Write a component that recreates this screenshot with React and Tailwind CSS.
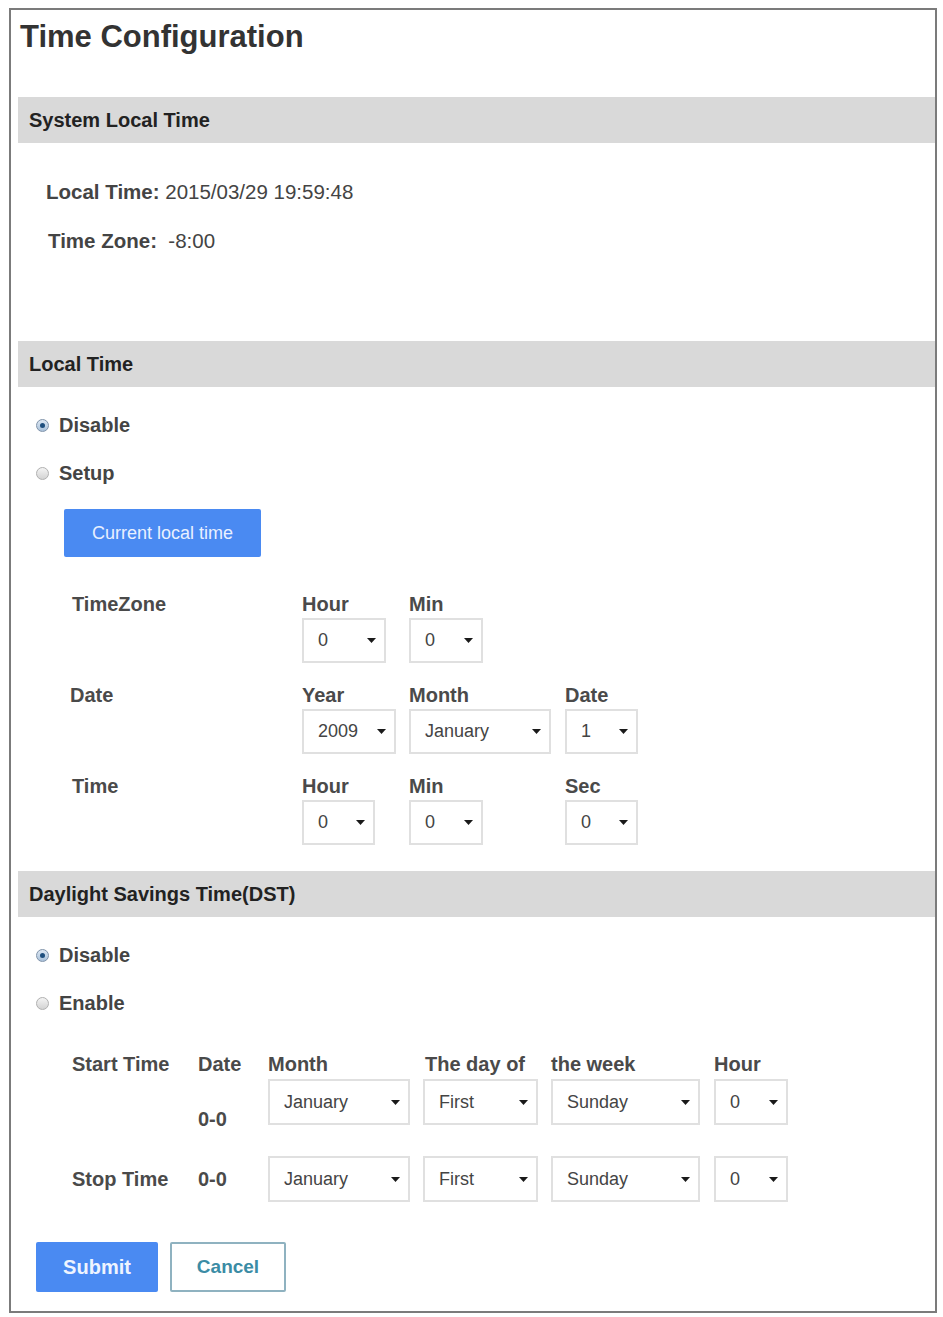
import React from "react";

const Arrow = () => (
  <svg width="9" height="5" viewBox="0 0 9 5" className="shrink-0">
    <path d="M0 0H9L4.5 5Z" fill="#1a1a1a" />
  </svg>
);

function Select({ value, className, tall = false }) {
  return (
    <div
      className={
        (tall ? "h-[46px] " : "h-[45px] ") +
        "flex items-center justify-between border-2 border-[#e0e0e0] bg-white pl-[14px] pr-[8px] text-[18px] text-[#444] " +
        className
      }
    >
      <span>{value}</span>
      <Arrow />
    </div>
  );
}

function Radio({ checked, label }) {
  return (
    <div className="flex h-[28px] items-center pl-[25px]">
      {checked ? (
        <span className="flex h-[13px] w-[13px] items-center justify-center rounded-full border border-[#7f93aa] bg-gradient-to-b from-[#dfe9f4] to-[#a9c1da]">
          <span className="h-[5px] w-[5px] rounded-full bg-[#1f4f7e]" />
        </span>
      ) : (
        <span className="h-[13px] w-[13px] rounded-full border border-[#b0b0b0] bg-gradient-to-b from-[#f4f4f4] to-[#d3d3d3]" />
      )}
      <span className="ml-[10px] text-[20px] font-bold leading-[28px] text-[#444]">{label}</span>
    </div>
  );
}

function Band({ children }) {
  return (
    <div className="ml-[7px] flex h-[46px] items-center bg-[#d9d9d9] pl-[11px] text-[20px] font-bold text-[#222]">
      {children}
    </div>
  );
}

const Label = ({ children, className = "" }) => (
  <div className={"h-[28px] text-[20px] font-bold leading-[28px] text-[#4a4a4a] " + className}>{children}</div>
);

export default function App() {
  return (
    <div className="min-h-[1317px] bg-white pl-[9px] pt-[8px] font-['Liberation_Sans',Arial,sans-serif]">
      <div className="flex h-[1305px] w-[928px] flex-col border-2 border-[#7b7b7b]">
        {/* Title */}
        <div className="h-[87px] pl-[9px] pt-[9px]">
          <h1 className="text-[31px] font-bold leading-[36px] text-[#333]">Time Configuration</h1>
        </div>

        {/* System local time */}
        <Band>System Local Time</Band>
        <div className="h-[198px] pt-[35px] text-[20.5px] leading-[28px] text-[#444]">
          <div className="pl-[35px]">
            <span className="font-bold">Local Time:</span> 2015/03/29 19:59:48
          </div>
          <div className="mt-[21px] pl-[37px]">
            <span className="font-bold">Time Zone:</span>&nbsp; -8:00
          </div>
        </div>

        {/* Local time */}
        <Band>Local Time</Band>
        <div className="pt-[24px]">
          <Radio checked label="Disable" />
          <div className="mt-[20px]">
            <Radio label="Setup" />
          </div>
          <button className="ml-[53px] mt-[22px] h-[48px] w-[197px] rounded-[2px] bg-[#4a8af2] text-[18px] text-[#e8f0ff]">
            Current local time
          </button>

          <div className="ml-[61px] mt-[33px] flex">
            <Label className="w-[230px]">TimeZone</Label>
            <div className="w-[107px]">
              <Label>Hour</Label>
              <Select value="0" className="w-[84px]" />
            </div>
            <div className="w-[156px]">
              <Label>Min</Label>
              <Select value="0" className="w-[74px]" />
            </div>
          </div>

          <div className="ml-[59px] mt-[18px] flex">
            <Label className="w-[232px]">Date</Label>
            <div className="w-[107px]">
              <Label>Year</Label>
              <Select value="2009" className="w-[94px]" />
            </div>
            <div className="w-[156px]">
              <Label>Month</Label>
              <Select value="January" className="w-[142px]" />
            </div>
            <div>
              <Label>Date</Label>
              <Select value="1" className="w-[73px]" />
            </div>
          </div>

          <div className="ml-[61px] mt-[18px] flex">
            <Label className="w-[230px]">Time</Label>
            <div className="w-[107px]">
              <Label>Hour</Label>
              <Select value="0" className="w-[73px]" />
            </div>
            <div className="w-[156px]">
              <Label>Min</Label>
              <Select value="0" className="w-[74px]" />
            </div>
            <div>
              <Label>Sec</Label>
              <Select value="0" className="w-[73px]" />
            </div>
          </div>
        </div>

        {/* Daylight savings */}
        <div className="mt-[26px]">
          <Band>Daylight Savings Time(DST)</Band>
        </div>
        <div className="pt-[24px]">
          <Radio checked label="Disable" />
          <div className="mt-[20px]">
            <Radio label="Enable" />
          </div>

          <div className="ml-[61px] mt-[33px] flex">
            <Label className="w-[126px]">Start Time</Label>
            <div className="w-[70px]">
              <Label>Date</Label>
              <Label className="mt-[27px]">0-0</Label>
            </div>
            <div className="w-[155px]">
              <Label>Month</Label>
              <Select tall value="January" className="mt-[1px] w-[142px]" />
            </div>
            <div className="w-[128px]">
              <Label className="pl-[2px]">The day of</Label>
              <Select tall value="First" className="mt-[1px] w-[115px]" />
            </div>
            <div className="w-[163px]">
              <Label>the week</Label>
              <Select tall value="Sunday" className="mt-[1px] w-[149px]" />
            </div>
            <div>
              <Label>Hour</Label>
              <Select tall value="0" className="mt-[1px] w-[74px]" />
            </div>
          </div>

          <div className="ml-[61px] mt-[23px] flex items-center">
            <Label className="w-[126px]">Stop Time</Label>
            <Label className="w-[70px]">0-0</Label>
            <div className="w-[155px]">
              <Select tall value="January" className="w-[142px]" />
            </div>
            <div className="w-[128px]">
              <Select tall value="First" className="w-[115px]" />
            </div>
            <div className="w-[163px]">
              <Select tall value="Sunday" className="w-[149px]" />
            </div>
            <Select tall value="0" className="w-[74px]" />
          </div>

          <div className="ml-[25px] mt-[40px] flex gap-[12px]">
            <button className="h-[50px] w-[122px] rounded-[2px] bg-[#4a8af2] text-[20px] font-bold text-[#eef4ff]">
              Submit
            </button>
            <button className="h-[50px] w-[116px] rounded-[2px] border-2 border-[#8fb2c0] bg-white text-[19px] font-bold text-[#3b8ca5]">
              Cancel
            </button>
          </div>
        </div>
      </div>
    </div>
  );
}
